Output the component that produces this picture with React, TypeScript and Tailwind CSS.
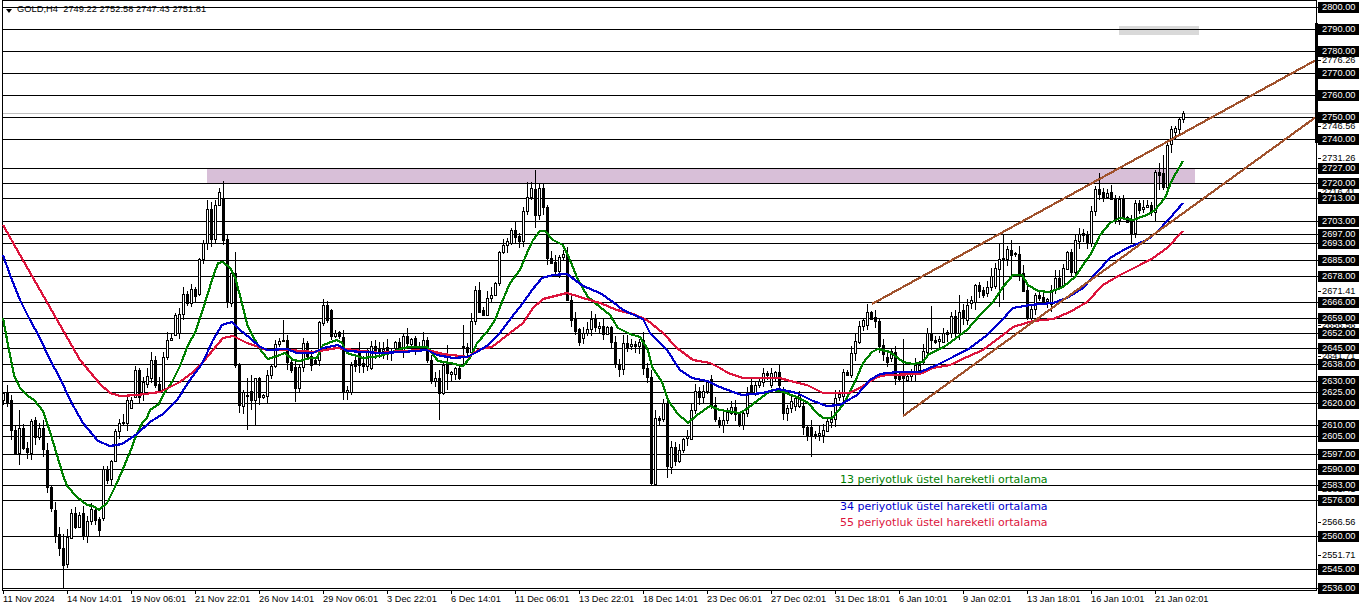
import React from 'react';

// [body top, body bottom, 1 = bearish] in screen px, one bar every 4px starting at x=3
const bars: number[][] = [
  [393,400,0],[393,402,1],[400,430,1],[430,453,1],[428,453,0],[428,448,1],[448,452,1],[421,453,0],[420,437,1],[428,437,0],
  [428,449,1],[450,487,1],[487,508,1],[510,535,1],[534,548,1],[548,565,1],[537,564,0],[513,538,0],[513,527,1],[515,527,0],
  [513,536,1],[521,536,0],[509,521,0],[510,520,1],[519,530,1],[469,518,0],[470,480,1],[461,479,0],[431,461,0],[423,431,0],
  [422,423,1],[400,423,0],[400,408,0],[370,397,0],[370,397,1],[382,393,0],[376,384,0],[360,378,0],[360,385,1],[384,391,1],
  [357,392,0],[340,357,0],[338,340,0],[315,335,0],[314,333,0],[294,314,0],[294,303,1],[289,303,0],[289,296,1],[259,294,0],
  [243,259,0],[209,243,0],[209,239,1],[205,239,0],[192,205,0],[198,240,1],[239,302,1],[273,303,0],[273,365,1],[365,405,1],
  [392,406,0],[395,396,1],[391,400,1],[378,400,0],[378,397,1],[395,397,0],[375,396,0],[366,375,0],[344,366,0],[341,344,0],
  [340,341,1],[340,362,1],[362,370,1],[367,388,1],[367,388,0],[343,367,0],[343,356,1],[356,365,1],[360,363,1],[322,360,0],
  [305,323,0],[305,320,1],[310,336,1],[333,336,0],[332,336,1],[337,392,1],[390,392,0],[365,392,0],[360,366,1],[350,365,1],
  [363,366,1],[350,366,0],[346,368,0],[346,352,1],[349,351,1],[349,351,0],[347,353,1],[351,353,0],[342,348,0],[342,350,1],
  [336,352,0],[336,343,1],[339,344,0],[338,347,1],[346,348,0],[340,347,0],[340,360,1],[360,381,1],[378,381,0],[378,393,1],
  [365,393,0],[365,373,1],[372,374,0],[368,374,0],[368,378,1],[346,348,1],[347,352,1],[321,352,0],[290,321,0],[290,312,1],
  [310,315,1],[298,315,0],[295,298,0],[283,295,0],[252,283,0],[245,252,0],[241,245,0],[230,243,0],[230,237,1],[236,241,1],
  [211,241,0],[197,211,0],[188,197,0],[189,215,1],[188,215,0],[188,207,1],[207,258,1],[258,263,1],[262,271,1],[257,271,0],
  [254,257,0],[254,300,1],[300,320,1],[319,331,1],[329,342,1],[333,338,0],[329,333,0],[319,329,0],[319,327,1],[326,328,0],
  [326,334,1],[327,334,0],[327,342,1],[342,364,1],[364,369,1],[343,369,0],[343,348,1],[344,346,0],[344,346,1],[342,346,0],
  [340,368,1],[368,377,1],[377,483,1],[418,484,0],[418,420,1],[403,419,0],[403,466,1],[447,467,0],[447,461,1],[450,461,0],
  [439,450,0],[436,438,0],[410,439,0],[391,410,0],[391,397,1],[391,397,0],[382,391,0],[379,405,1],[405,419,1],[420,424,1],
  [420,425,0],[412,420,0],[407,413,0],[407,414,1],[414,425,1],[413,425,0],[395,413,0],[385,391,1],[385,393,0],[381,385,0],
  [373,382,0],[373,375,1],[373,385,0],[372,378,0],[372,385,1],[393,413,1],[408,413,0],[401,408,0],[398,406,0],[395,406,0],
  [406,427,1],[427,435,1],[427,435,1],[434,436,1],[433,435,0],[430,435,0],[421,431,0],[419,422,0],[398,419,0],[394,397,0],
  [372,396,0],[372,375,1],[353,375,0],[341,353,0],[326,342,0],[320,326,0],[312,325,0],[312,319,1],[317,321,1],[321,346,1],
  [345,354,1],[357,362,1],[351,358,0],[352,378,1],[376,379,1],[376,378,1],[376,380,0],[373,376,0],[365,374,0],[365,370,0],
  [351,362,0],[333,352,0],[333,340,1],[340,342,1],[339,341,0],[333,342,0],[332,334,1],[316,333,0],[316,333,1],[312,333,0],
  [310,318,1],[305,320,0],[300,303,0],[285,302,0],[285,291,1],[290,295,1],[287,293,0],[276,287,0],[268,286,0],[259,269,0],
  [258,260,1],[249,259,0],[250,255,1],[253,254,1],[254,273,1],[273,291,1],[290,318,1],[309,318,0],[295,309,0],[295,298,1],
  [297,303,1],[299,301,0],[290,304,0],[278,290,0],[278,288,1],[268,285,0],[252,269,0],[252,272,1],[240,272,0],[234,241,0],
  [233,235,1],[234,243,1],[211,243,0],[189,211,0],[189,194,1],[192,197,1],[193,197,0],[192,199,1],[199,220,1],[199,220,0],
  [199,217,1],[217,222,1],[222,233,1],[203,233,0],[203,210,1],[207,209,0],[205,207,0],[205,212,1],[172,212,0],[172,175,1],
  [173,187,1],[145,187,0],[129,144,0],[128,132,0],[119,129,0],[113,119,0],
];

// wicks that stand out, keyed by bar x: [high, low]
const wicks: Record<number, number[]> = {
  11: [395, 440], 19: [410, 465], 63: [534, 588], 223: [181, 245], 207: [200, 250], 235: [252, 368], 247: [378, 430], 251: [375, 410], 255: [378, 425],
  283: [320, 342], 295: [360, 402], 343: [330, 400], 439: [370, 420], 447: [345, 390], 463: [325, 366], 535: [170, 228], 531: [182, 200], 527: [182, 215],
  539: [183, 220], 543: [183, 215], 651: [370, 485], 655: [410, 485], 667: [398, 478], 811: [420, 457], 903: [339, 416], 931: [306, 350], 959: [295, 340],
  999: [243, 307], 1003: [234, 300], 1011: [240, 275], 1099: [173, 200], 1131: [215, 243], 1155: [170, 222], 1159: [163, 190], 1163: [155, 190],
  1171: [126, 153], 1175: [126, 140], 1179: [118, 134], 1183: [111, 123],
};

const hash = (n: number) => {
  const s = Math.sin(n * 12.9898) * 43758.5453;
  return s - Math.floor(s);
};

const green = '3,318 8,345 14,375 20,388 28,396 34,400 43,411 50,432 57,455 62,472 67,486 77,497 87,505 93,506 99,510 107,503 115,487 123,469 132,447 137,433 143,422 147,418 150,410 159,404 163,395 172,382 180,366 188,345 195,333 202,312 208,293 213,277 218,263 223,262 230,268 235,277 242,303 248,327 255,340 262,352 268,359 277,356 285,353 293,360 300,361 310,358 317,358 323,345 337,340 342,343 347,353 363,358 380,356 390,353 403,348 410,347 427,347 432,353 438,361 450,363 463,366 470,358 477,343 487,332 495,320 502,302 510,283 520,270 527,253 533,240 540,231 545,231 553,240 563,245 570,260 578,280 588,297 600,307 610,315 618,328 630,334 640,337 648,350 652,367 662,382 668,400 677,413 688,423 697,415 710,406 720,410 740,413 748,408 762,397 772,390 780,391 797,397 808,403 817,413 823,418 832,418 843,405 855,382 863,363 872,352 878,349 890,352 903,362 913,364 923,362 928,355 947,345 967,330 980,315 993,302 1003,287 1013,275 1022,275 1028,285 1038,291 1050,292 1063,287 1075,277 1083,265 1092,252 1100,235 1110,223 1120,218 1133,220 1147,215 1155,210 1165,198 1172,180 1183,161';
const blue = '3,255 10,275 20,300 30,320 40,338 50,360 60,378 70,400 83,423 98,441 110,446 122,444 137,434 150,422 163,414 177,400 190,380 202,364 213,340 222,325 232,322 240,330 250,338 260,347 268,350 287,349 297,353 313,353 323,348 338,345 347,351 380,353 403,352 427,350 437,355 453,358 467,357 477,352 488,345 500,333 515,313 523,303 532,290 542,278 553,275 567,274 583,286 600,293 613,302 623,310 643,319 650,333 667,350 680,370 692,378 707,381 720,387 733,392 742,395 763,393 778,389 797,393 813,401 827,406 840,405 857,395 870,380 880,374 897,372 920,372 937,365 953,357 970,348 987,335 1000,322 1013,308 1030,305 1053,303 1067,298 1083,288 1097,272 1110,258 1127,248 1147,240 1157,232 1170,218 1183,203';
const red = '3,225 20,255 40,290 60,325 80,360 100,384 110,393 120,396 137,395 160,392 180,382 193,372 203,362 213,350 223,338 233,336 247,343 267,350 290,350 313,352 337,348 380,353 400,351 427,350 443,354 460,356 468,357 480,349 492,347 510,333 523,323 533,308 543,299 567,293 583,298 600,303 617,310 633,314 647,320 663,333 677,348 693,360 710,363 720,368 728,373 743,378 780,378 790,381 807,385 823,393 850,393 863,386 877,377 887,375 920,374 933,368 950,365 967,357 983,350 1003,335 1013,327 1033,321 1053,319 1070,312 1087,302 1103,285 1120,275 1140,265 1153,258 1167,248 1183,231';

const lineLevels = [
  [2800, 7], [2790, 29], [2780, 51], [2770, 73], [2760, 95], [2750, 117], [2740, 139], [2727, 168], [2720, 183], [2713, 198], [2703, 221],
  [2697, 234], [2693, 243], [2685, 260], [2678, 276], [2666, 302], [2659, 318], [2652, 333], [2645, 348], [2638, 364], [2630, 381], [2625, 392],
  [2620, 403], [2610, 425], [2605, 436], [2597, 454], [2590, 469], [2583, 485], [2576, 500], [2560, 536], [2545, 569], [2536, 588],
];

const scaleTicks = [
  ['2776.26', 60], ['2746.56', 126], ['2731.26', 158], ['2716.41', 192], ['2671.41', 291], ['2656.56', 325],
  ['2641.71', 356], ['2581.41', 489], ['2566.56', 522], ['2551.71', 555],
];

const dates = [
  '11 Nov 2024', '14 Nov 14:01', '19 Nov 06:01', '21 Nov 22:01', '26 Nov 14:01', '29 Nov 06:01', '3 Dec 22:01', '6 Dec 14:01', '11 Dec 06:01', '13 Dec 22:01',
  '18 Dec 14:01', '23 Dec 06:01', '27 Dec 02:01', '31 Dec 18:01', '6 Jan 10:01', '9 Jan 02:01', '13 Jan 18:01', '16 Jan 10:01', '21 Jan 02:01',
];

const Candles = () => (
  <>
    {bars.map(([top, bottom, bear], i) => {
      const x = 3 + i * 4;
      const wick = wicks[x] || [top - 1 - Math.floor(hash(i) * 8), bottom + 1 + Math.floor(hash(i + 500) * 8)];
      return (
        <g key={x}>
          <rect x={x} y={wick[0]} width={1} height={wick[1] - wick[0]} fill="#000" />
          {bear ? (
            <rect x={x - 1} y={top} width={3} height={bottom - top + 1} fill="#000" />
          ) : (
            <rect x={x - 0.5} y={top + 0.5} width={2} height={bottom - top} fill="#fff" stroke="#000" />
          )}
        </g>
      );
    })}
  </>
);

const Chart = () => (
  <svg className="absolute left-0 top-0" width={1317} height={591} shapeRendering="crispEdges">
    <rect x={207} y={168} width={988} height={15} fill="#d8bfd8" />
    <rect x={1119} y={26} width={80} height={9} fill="#d9d9d9" />
    <rect x={3} y={113} width={1313} height={1} fill="#c0c0c0" />
    {lineLevels.map(([price, y]) => (
      <rect key={price} x={3} y={y} width={1313} height={1} fill="#000" />
    ))}
    <Candles />
    <polyline points={green} fill="none" stroke="#008000" strokeWidth={2.2} />
    <polyline points={red} fill="none" stroke="#dc143c" strokeWidth={2.2} />
    <polyline points={blue} fill="none" stroke="#0000cd" strokeWidth={2.2} />
    <line x1={872} y1={304} x2={1316} y2={60} stroke="#a0522d" strokeWidth={2.2} />
    <line x1={903} y1={416} x2={1316} y2={117} stroke="#a0522d" strokeWidth={2.2} />
  </svg>
);

const PriceScale = () => (
  <div className="relative flex-1 font-['Liberation_Sans',sans-serif] text-[9.25px] leading-[11px]">
    <div className="absolute left-[-2px] top-[23px] h-[120px] w-[3px] bg-black" />
    {scaleTicks.map(([label, y]) => (
      <div key={label} className="absolute left-[1px] flex items-center text-black" style={{ top: (y as number) - 5 }}>
        <span className="mr-[1px] h-px w-[3px] bg-black" />
        <span>{label}</span>
      </div>
    ))}
    {lineLevels.map(([price, y]) => (
      <div key={price} className="absolute left-0 flex items-center" style={{ top: y - 5 }}>
        <span className="h-px w-px bg-black" />
        <span className="w-[41px] bg-black pl-[4px] text-white">{price}.00</span>
      </div>
    ))}
  </div>
);

export default function App() {
  return (
    <div className="flex h-[611px] w-[1362px] flex-col overflow-hidden bg-white">
      <div className="flex h-[591px]">
        <div className="relative h-full w-[1317px]">
          <div className="ml-[2px] h-full border border-black" />
          <Chart />
          <div className="absolute left-[6px] top-[4px] flex items-center gap-[5px] font-['Liberation_Sans',sans-serif] text-[9.25px] leading-[11px] tracking-[0.05px] text-black">
            <span className="mt-[2px] h-0 w-0 border-x-[3.5px] border-t-[4px] border-x-transparent border-t-black" />
            <span className="whitespace-pre">GOLD,H4  2749.22 2752.58 2747.43 2751.81</span>
          </div>
          <div className="absolute left-[840px] top-[473px] whitespace-nowrap font-['DejaVu_Sans',sans-serif] text-[11px] leading-[13px] text-[#008000]">
            13 periyotluk üstel hareketli ortalama
          </div>
          <div className="absolute left-[840px] top-[500px] whitespace-nowrap font-['DejaVu_Sans',sans-serif] text-[11px] leading-[13px] text-[#0000cd]">
            34 periyotluk üstel hareketli ortalama
          </div>
          <div className="absolute left-[840px] top-[516px] whitespace-nowrap font-['DejaVu_Sans',sans-serif] text-[11px] leading-[13px] text-[#dc143c]">
            55 periyotluk üstel hareketli ortalama
          </div>
        </div>
        <PriceScale />
      </div>
      <div className="flex pl-[3px] font-['Liberation_Sans',sans-serif] text-[9.25px] leading-[11px] text-black">
        {dates.map((d) => (
          <div key={d} className="w-16 shrink-0">
            <div className="h-[3px] w-px bg-black" />
            <div className="whitespace-nowrap">{d}</div>
          </div>
        ))}
      </div>
    </div>
  );
}
